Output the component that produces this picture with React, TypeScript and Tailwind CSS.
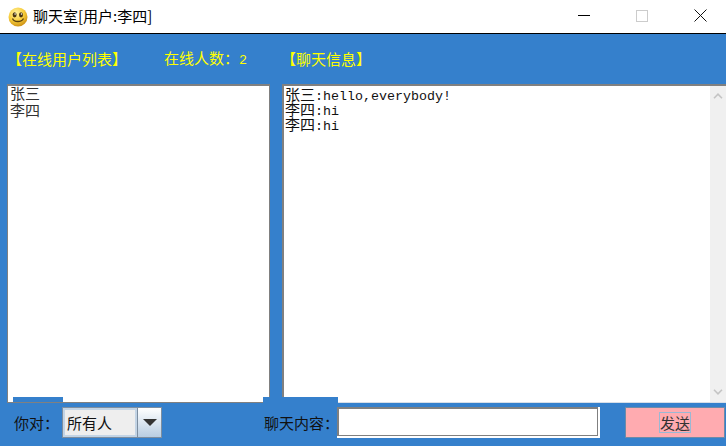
import React from "react";

const Mono: React.FC<{ children: React.ReactNode }> = ({ children }) => (
  <span className="font-['Liberation_Mono',monospace] text-[13.33px]">{children}</span>
);

const Smiley = () => (
  <svg width="20" height="20" viewBox="0 0 20 20">
    <defs>
      <radialGradient id="face" cx="40%" cy="30%" r="75%">
        <stop offset="0%" stopColor="#fff2a0" />
        <stop offset="55%" stopColor="#f7cd3c" />
        <stop offset="100%" stopColor="#c98a10" />
      </radialGradient>
    </defs>
    <circle cx="10" cy="10" r="9.5" fill="url(#face)" />
    <ellipse cx="6.6" cy="7.8" rx="2" ry="2.6" fill="#4a3510" />
    <ellipse cx="13" cy="7.8" rx="2" ry="2.6" fill="#4a3510" />
    <circle cx="7.1" cy="7" r="0.8" fill="#fff" />
    <circle cx="13.5" cy="7" r="0.8" fill="#fff" />
    <path d="M4.5 11.5 C6 15.5 13.5 15.5 15.5 11.5" fill="none" stroke="#5a400f" strokeWidth="1.3" />
  </svg>
);

const messages = [
  { user: "张三", text: "hello,everybody!" },
  { user: "李四", text: "hi" },
  { user: "李四", text: "hi" },
];

export default function App() {
  return (
    <div className="relative w-[726px] h-[446px] overflow-hidden bg-[#3580cc] font-['Noto_Sans_CJK_SC',sans-serif]">
      {/* title bar */}
      <div className="h-[34px] bg-white border-b border-black flex items-center pl-[8px]">
        <Smiley />
        <span className="ml-[5px] text-[15px] text-black leading-none mb-[2px]">聊天室[用户:李四]</span>
        <div className="ml-auto flex items-center mb-[2px]">
          <div className="w-[12px] h-px bg-black mr-[46px]" />
          <div className="w-[12px] h-[12px] border border-[#cccccc] mr-[46px]" />
          <svg width="13" height="13" viewBox="0 0 13 13" className="mr-[19px]">
            <path d="M0.5 0.5 L12.5 12.5 M12.5 0.5 L0.5 12.5" stroke="#111" strokeWidth="1" />
          </svg>
        </div>
      </div>

      {/* labels */}
      <div className="h-[50px] flex items-center text-[15px] text-[#ffff00] leading-none pb-[1px]">
        <span className="ml-[7px] w-[157px] whitespace-nowrap">【在线用户列表】</span>
        <span className="w-[117px] whitespace-nowrap">
          在线人数：<Mono>2</Mono>
        </span>
        <span className="whitespace-nowrap">【聊天信息】</span>
      </div>

      {/* panels */}
      <div className="h-[319px] flex pl-[7px]">
        <div className="w-[263px] bg-white border border-t-2 border-[#808080] pl-[2px] text-[15px] leading-[17px] text-[#333333]">
          <div className="-mt-[2px]">
            <div>张三</div>
            <div>李四</div>
          </div>
        </div>
        <div className="ml-[12px] flex-1 flex bg-white border-t-2 border-l-2 border-[#808080]">
          <div className="flex-1 border-b border-[#d8dfe8] pl-[1px] text-[15px] leading-[15px] text-[#111111]">
            {messages.map((m, i) => (
              <div key={i} className="h-[15px] whitespace-nowrap">
                {m.user}
                <Mono>:{m.text}</Mono>
              </div>
            ))}
          </div>
          <div className="w-[16px] bg-[#f0f0f0] border-b border-[#d8dfe8] flex flex-col justify-between items-center py-[7px]">
            <svg width="10" height="6" viewBox="0 0 10 6">
              <path d="M1 5.2 L5 1.2 L9 5.2" fill="none" stroke="#c4c4c4" strokeWidth="1.6" />
            </svg>
            <svg width="10" height="6" viewBox="0 0 10 6">
              <path d="M1 0.8 L5 4.8 L9 0.8" fill="none" stroke="#c4c4c4" strokeWidth="1.6" />
            </svg>
          </div>
        </div>
      </div>

      {/* bottom row */}
      <div className="flex items-center h-[43px] pb-[5px] pt-[1px] text-[15px] text-[#111111] leading-none">
        <span className="ml-[14px] w-[48px] whitespace-nowrap">你对：</span>
        <div className="w-[100px] h-[31px] flex border border-[#7d8ea0]">
          <div className="flex-1 bg-[#eeeeee] border-2 border-[#c3d4e5] flex items-center pl-[2px]">所有人</div>
          <div className="w-[24px] border-l border-[#7d8ea0] bg-gradient-to-b from-white to-[#b8cde2] flex items-center justify-center">
            <svg width="14" height="7" viewBox="0 0 14 7">
              <path d="M0 0 H14 L7 7 Z" fill="#333333" />
            </svg>
          </div>
        </div>
        <span className="ml-[102px] w-[73px] whitespace-nowrap">聊天内容：</span>
        <div className="w-[263px] h-[31px] bg-white pr-[2px] pb-[2px]">
          <div className="h-full border-2 border-[#808080] border-r-[1px] border-b-[1px]" />
        </div>
        <button className="ml-[25px] w-[100px] h-[31px] bg-[#ffabb0] border border-[#6d8ba8] flex items-center justify-center text-[15px] text-[#333333]">
          <span className="border border-[#9ab8d4] h-[21px] w-[32px] flex items-center justify-center">发送</span>
        </button>
      </div>

      {/* repaint glitches that lie over the list panels */}
      <div className="absolute left-[13px] top-[397px] w-[50px] h-[5px] bg-[#3580cc]" />
      <div className="absolute left-[263px] top-[397px] w-[75px] h-[7px] bg-[#3580cc]" />
    </div>
  );
}
